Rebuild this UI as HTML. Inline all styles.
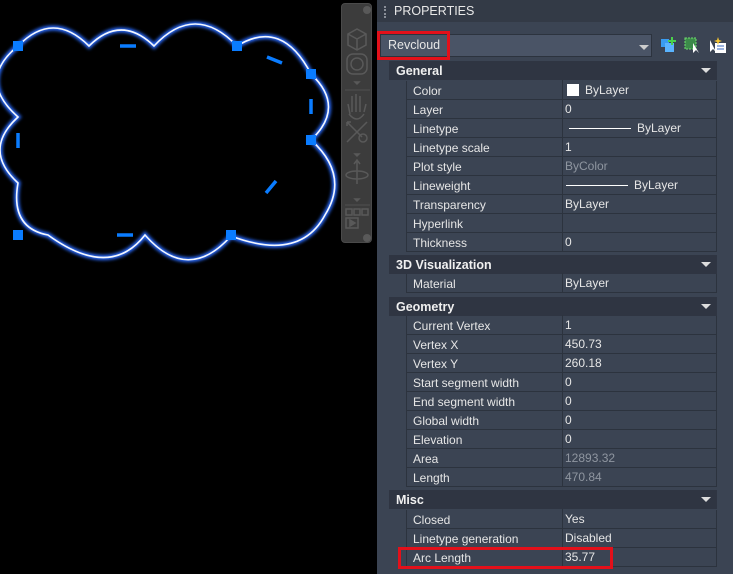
<!DOCTYPE html>
<html><head><style>
*{margin:0;padding:0;box-sizing:border-box}
body{width:733px;height:574px;background:#000;position:relative;overflow:hidden;font-family:"Liberation Sans",sans-serif;font-size:12px;color:#e6e6e6}
.abs{position:absolute}
#panel{left:377px;top:0;width:356px;height:574px;background:#3b4453}
#title{left:377px;top:0;width:356px;height:22px;background:#333a46}
.hdr{position:absolute;left:389px;width:328px;height:19px;background:#2f3542;font-weight:bold;font-size:12.5px;padding:3px 0 0 7px;color:#f0f0f0}
.hdr:after{content:"";position:absolute;right:6px;top:7px;border-left:5px solid transparent;border-right:5px solid transparent;border-top:5px solid #ddd}
.row{position:absolute;left:406px;width:311px;height:19px;border-bottom:1px solid #2c333e;border-left:1px solid #2c333e;border-right:1px solid #2c333e}
.row .k{position:absolute;left:6px;top:3px}
.row .v{position:absolute;left:155px;height:19px;border-left:1px solid #2c333e;padding-left:2px;top:-1px;padding-top:3px;width:156px}
.g{color:#8f96a0}
.ln{display:inline-block;width:62px;height:1px;background:#fff;vertical-align:middle;margin:0 6px 0 4px}
</style></head><body>
<svg class="abs" style="left:0;top:0" width="340" height="270">
<defs><filter id="gl"><feGaussianBlur stdDeviation="1.5"/></filter></defs>
<g fill="none">
<path d="M18,46 Q53,10 89,46 Q121,14 154,46 Q195,2 237,46 Q282,18 311,74 Q346,107 311,140 Q350,175 325,215 Q300,262 231,236 Q188,284 145,235 Q110,280 48,235 Q10,228 18,183 Q-18,150 18,117 Q-24,80 18,46" stroke="#2a6cff" stroke-width="5" filter="url(#gl)"/>
<path d="M18,46 Q53,10 89,46 Q121,14 154,46 Q195,2 237,46 Q282,18 311,74 Q346,107 311,140 Q350,175 325,215 Q300,262 231,236 Q188,284 145,235 Q110,280 48,235 Q10,228 18,183 Q-18,150 18,117 Q-24,80 18,46" stroke="#f4f8ff" stroke-width="1.6"/>
</g>
<g fill="#0a7cff">
<rect x="13" y="41" width="10" height="10"/><rect x="232" y="41" width="10" height="10"/>
<rect x="306" y="69" width="10" height="10"/><rect x="306" y="135" width="10" height="10"/>
<rect x="13" y="230" width="10" height="10"/><rect x="226" y="230" width="10" height="10"/>
</g>
<g stroke="#0a7cff" stroke-width="3.5">
<line x1="120" y1="46" x2="136" y2="46"/><line x1="117" y1="235" x2="133" y2="235"/>
<line x1="267" y1="57" x2="282" y2="63"/><line x1="311" y1="99" x2="311" y2="114"/>
<line x1="18" y1="133" x2="18" y2="148"/><line x1="266" y1="193" x2="276" y2="181"/>
</g>
</svg>
<div class="abs" style="left:341px;top:3px;width:31px;height:240px;background:#3c3c3c;border:1px solid #4a4a4a;border-radius:4px">
<svg width="31" height="240" fill="none" stroke="#595959" stroke-width="1.5">
<circle cx="25" cy="6" r="4" fill="#595959" stroke="none"/>
<path d="M6,30 L15,25 L24,30 L24,41 L15,46 L6,41Z M6,30 L15,35 L24,30 M15,35 V46"/>
<rect x="5" y="50" width="20" height="20" rx="6"/><circle cx="15" cy="60" r="6"/>
<path d="M13,78 h4 l-2,2z" fill="#595959"/>
<line x1="3" y1="86" x2="28" y2="86" stroke="#4a4a4a"/>
<path d="M8,110 L6,100 M10,108 V92 M14,108 V90 M18,108 V92 M22,108 L24,100 M7,110 Q15,120 22,110"/>
<path d="M5,118 L20,133 M25,118 L5,138 M5,118 h4 M5,118 v4"/><circle cx="21" cy="134" r="4"/>
<path d="M13,150 h4 l-2,2z" fill="#595959"/>
<path d="M15,156 V180 M12,160 L15,156 L18,160"/><ellipse cx="15" cy="171" rx="11" ry="4"/>
<path d="M13,195 h4 l-2,2z" fill="#595959"/>
<line x1="3" y1="201" x2="28" y2="201" stroke="#4a4a4a"/>
<rect x="4" y="205" width="6" height="6"/><rect x="12" y="205" width="6" height="6"/><rect x="20" y="205" width="6" height="6"/>
<rect x="4" y="214" width="12" height="10"/><path d="M8,216 L13,219 L8,222Z" fill="#595959"/>
<circle cx="25" cy="234" r="4" fill="#595959" stroke="none"/>
</svg></div>
<div id="panel" class="abs"></div>
<div id="title" class="abs"></div>
<div class="abs" style="left:384px;top:6px;width:2px;height:12px;border-left:2px dotted #8a8f98"></div>
<div class="abs" style="left:394px;top:4px;font-size:12.5px;color:#e8e8e8">PROPERTIES</div>
<div class="abs" style="left:380px;top:34px;width:272px;height:23px;background:#4a5466;border:1px solid #2c333e"></div>
<div class="abs" style="left:388px;top:38px;font-size:12.5px">Revcloud</div>
<div class="abs" style="left:639px;top:45px;border-left:5px solid transparent;border-right:5px solid transparent;border-top:5px solid #ccc"></div>
<div class="abs" style="left:377px;top:31px;width:73px;height:29px;border:3px solid #e3101a"></div>
<svg class="abs" style="left:660px;top:36px" width="70" height="18">
<rect x="1" y="3" width="8" height="8" fill="#3a9cf0"/><rect x="5" y="7" width="9" height="9" fill="#5ab4ff"/><path d="M12,1 v8 M8,5 h8" stroke="#4ad24a" stroke-width="2"/>
<rect x="25" y="2" width="11" height="11" fill="#3c8a4a" stroke="#6fe06f" stroke-dasharray="2,1"/><path d="M33,7 L33,17 L36,14 L39,17" fill="#fff"/>
<path d="M50,4 L50,16 L53,13 L56,16" fill="#fff"/><rect x="55" y="7" width="11" height="10" fill="#fff"/><path d="M57,10h7M57,13h7" stroke="#3a6ac0"/><path d="M58,1 l1,3 3,1-3,1-1,3-1-3-3-1 3-1z" fill="#f4c430"/>
</svg>
<div class="hdr" style="top:61px">General</div>
<div class="row" style="top:81px"><span class="k">Color</span><span class="v"><span style="display:inline-block;width:12px;height:12px;background:#fff;vertical-align:-2px;margin:0 6px 0 2px"></span>ByLayer</span></div>
<div class="row" style="top:100px"><span class="k">Layer</span><span class="v">0</span></div>
<div class="row" style="top:119px"><span class="k">Linetype</span><span class="v"><span class="ln"></span>ByLayer</span></div>
<div class="row" style="top:138px"><span class="k">Linetype scale</span><span class="v">1</span></div>
<div class="row" style="top:157px"><span class="k">Plot style</span><span class="v g">ByColor</span></div>
<div class="row" style="top:176px"><span class="k">Lineweight</span><span class="v"><span class="ln" style="margin-left:1px"></span>ByLayer</span></div>
<div class="row" style="top:195px"><span class="k">Transparency</span><span class="v">ByLayer</span></div>
<div class="row" style="top:214px"><span class="k">Hyperlink</span><span class="v"></span></div>
<div class="row" style="top:233px"><span class="k">Thickness</span><span class="v">0</span></div>
<div class="hdr" style="top:255px">3D Visualization</div>
<div class="row" style="top:274px"><span class="k">Material</span><span class="v">ByLayer</span></div>
<div class="hdr" style="top:297px">Geometry</div>
<div class="row" style="top:316px"><span class="k">Current Vertex</span><span class="v">1</span></div>
<div class="row" style="top:335px"><span class="k">Vertex X</span><span class="v">450.73</span></div>
<div class="row" style="top:354px"><span class="k">Vertex Y</span><span class="v">260.18</span></div>
<div class="row" style="top:373px"><span class="k">Start segment width</span><span class="v">0</span></div>
<div class="row" style="top:392px"><span class="k">End segment width</span><span class="v">0</span></div>
<div class="row" style="top:411px"><span class="k">Global width</span><span class="v">0</span></div>
<div class="row" style="top:430px"><span class="k">Elevation</span><span class="v">0</span></div>
<div class="row" style="top:449px"><span class="k">Area</span><span class="v g">12893.32</span></div>
<div class="row" style="top:468px"><span class="k">Length</span><span class="v g">470.84</span></div>
<div class="hdr" style="top:490px">Misc</div>
<div class="row" style="top:510px"><span class="k">Closed</span><span class="v">Yes</span></div>
<div class="row" style="top:529px"><span class="k">Linetype generation</span><span class="v">Disabled</span></div>
<div class="row" style="top:548px"><span class="k">Arc Length</span><span class="v">35.77</span></div>
<div class="abs" style="left:398px;top:547px;width:215px;height:22px;border:3px solid #e3101a"></div>
</body></html>
